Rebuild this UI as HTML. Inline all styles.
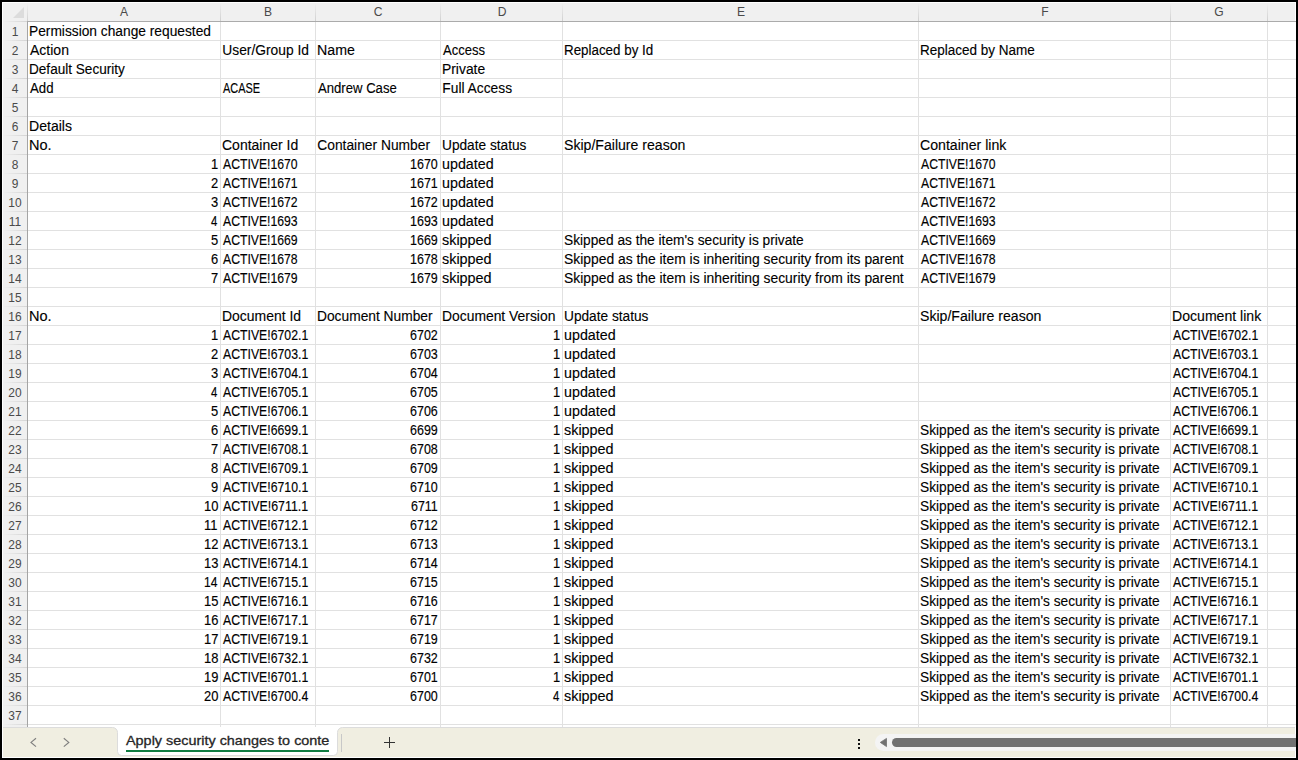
<!DOCTYPE html>
<html><head><meta charset="utf-8"><style>
html,body{margin:0;padding:0;}
body{width:1298px;height:760px;background:#000;position:relative;overflow:hidden;font-family:"Liberation Sans",sans-serif;}
#frame{position:absolute;left:2px;top:2px;width:1294px;height:756px;background:#fff;overflow:hidden;}
.abs{position:absolute;}
#colhdr{position:absolute;left:1px;top:1px;width:1292px;height:18px;background:#f0f0f0;}
#rowhdr{position:absolute;left:1px;top:1px;width:24px;height:724px;background:#f0f0f0;}
#hdrline{position:absolute;left:25px;top:19px;width:1269px;height:1px;background:#ababab;}
#hdrline0{position:absolute;left:1px;top:19px;width:24px;height:1px;background:linear-gradient(to right,#f0f0f0,#d4d4d4);}
#rhline0{position:absolute;left:25px;top:1px;width:1px;height:18px;background:linear-gradient(to bottom,#f0f0f0,#d0d0d0);}
#rhline{position:absolute;left:25px;top:20px;width:1px;height:705px;background:#a4a4a4;}
.vl{position:absolute;top:20px;width:1px;height:705px;background:#e1e1e1;margin-left:-2px;}
.hvl{position:absolute;top:1px;width:1px;height:18px;background:linear-gradient(to bottom,#f0f0f0,#d0d0d0);margin-left:-2px;}
.hl{position:absolute;left:26px;width:1269px;height:1px;background:#e1e1e1;margin-top:-2px;}
.rhl{position:absolute;left:1px;width:24px;height:1px;background:linear-gradient(to right,#f0f0f0,#d4d4d4);margin-top:-2px;}
.t{position:absolute;font-size:13.8px;line-height:19px;white-space:pre;color:#000;-webkit-text-stroke:0.12px #000;transform-origin:0 0;margin-left:-2px;margin-top:-2px;}
.cl{position:absolute;top:0px;width:60px;height:18px;line-height:19px;text-align:center;font-size:13px;color:#4a4a4a;margin-left:-2px;transform:scaleX(0.93);}
.rn{position:absolute;left:1px;width:24px;height:18px;line-height:19px;text-align:center;font-size:13px;color:#4a4a4a;margin-top:-2px;transform:scaleX(0.92);}
#corner{position:absolute;left:10.5px;top:4.5px;width:0;height:0;border-left:11px solid transparent;border-bottom:11px solid #dcdcdc;}
</style></head><body>
<div id="frame">
<div id="colhdr"></div><div id="rowhdr"></div>
<div id="corner"></div>
<div class="vl" style="left:220px"></div><div class="hvl" style="left:220px"></div><div class="vl" style="left:315px"></div><div class="hvl" style="left:315px"></div><div class="vl" style="left:440px"></div><div class="hvl" style="left:440px"></div><div class="vl" style="left:562px"></div><div class="hvl" style="left:562px"></div><div class="vl" style="left:918px"></div><div class="hvl" style="left:918px"></div><div class="vl" style="left:1170px"></div><div class="hvl" style="left:1170px"></div><div class="vl" style="left:1267px"></div><div class="hvl" style="left:1267px"></div><div class="hl" style="top:40px"></div><div class="rhl" style="top:40px"></div><div class="hl" style="top:59px"></div><div class="rhl" style="top:59px"></div><div class="hl" style="top:78px"></div><div class="rhl" style="top:78px"></div><div class="hl" style="top:97px"></div><div class="rhl" style="top:97px"></div><div class="hl" style="top:116px"></div><div class="rhl" style="top:116px"></div><div class="hl" style="top:135px"></div><div class="rhl" style="top:135px"></div><div class="hl" style="top:154px"></div><div class="rhl" style="top:154px"></div><div class="hl" style="top:173px"></div><div class="rhl" style="top:173px"></div><div class="hl" style="top:192px"></div><div class="rhl" style="top:192px"></div><div class="hl" style="top:211px"></div><div class="rhl" style="top:211px"></div><div class="hl" style="top:230px"></div><div class="rhl" style="top:230px"></div><div class="hl" style="top:249px"></div><div class="rhl" style="top:249px"></div><div class="hl" style="top:268px"></div><div class="rhl" style="top:268px"></div><div class="hl" style="top:287px"></div><div class="rhl" style="top:287px"></div><div class="hl" style="top:306px"></div><div class="rhl" style="top:306px"></div><div class="hl" style="top:325px"></div><div class="rhl" style="top:325px"></div><div class="hl" style="top:344px"></div><div class="rhl" style="top:344px"></div><div class="hl" style="top:363px"></div><div class="rhl" style="top:363px"></div><div class="hl" style="top:382px"></div><div class="rhl" style="top:382px"></div><div class="hl" style="top:401px"></div><div class="rhl" style="top:401px"></div><div class="hl" style="top:420px"></div><div class="rhl" style="top:420px"></div><div class="hl" style="top:439px"></div><div class="rhl" style="top:439px"></div><div class="hl" style="top:458px"></div><div class="rhl" style="top:458px"></div><div class="hl" style="top:477px"></div><div class="rhl" style="top:477px"></div><div class="hl" style="top:496px"></div><div class="rhl" style="top:496px"></div><div class="hl" style="top:515px"></div><div class="rhl" style="top:515px"></div><div class="hl" style="top:534px"></div><div class="rhl" style="top:534px"></div><div class="hl" style="top:553px"></div><div class="rhl" style="top:553px"></div><div class="hl" style="top:572px"></div><div class="rhl" style="top:572px"></div><div class="hl" style="top:591px"></div><div class="rhl" style="top:591px"></div><div class="hl" style="top:610px"></div><div class="rhl" style="top:610px"></div><div class="hl" style="top:629px"></div><div class="rhl" style="top:629px"></div><div class="hl" style="top:648px"></div><div class="rhl" style="top:648px"></div><div class="hl" style="top:667px"></div><div class="rhl" style="top:667px"></div><div class="hl" style="top:686px"></div><div class="rhl" style="top:686px"></div><div class="hl" style="top:705px"></div><div class="rhl" style="top:705px"></div><div class="hl" style="top:724px"></div><div class="rhl" style="top:724px"></div>
<div id="hdrline"></div><div id="hdrline0"></div><div id="rhline"></div><div id="rhline0"></div>
<div class="cl" style="left:94.0px">A</div><div class="cl" style="left:238.0px">B</div><div class="cl" style="left:348.0px">C</div><div class="cl" style="left:471.5px">D</div><div class="cl" style="left:710.5px">E</div><div class="cl" style="left:1014.5px">F</div><div class="cl" style="left:1189.0px">G</div>
<div class="rn" style="top:22px">1</div><div class="rn" style="top:41px">2</div><div class="rn" style="top:60px">3</div><div class="rn" style="top:79px">4</div><div class="rn" style="top:98px">5</div><div class="rn" style="top:117px">6</div><div class="rn" style="top:136px">7</div><div class="rn" style="top:155px">8</div><div class="rn" style="top:174px">9</div><div class="rn" style="top:193px">10</div><div class="rn" style="top:212px">11</div><div class="rn" style="top:231px">12</div><div class="rn" style="top:250px">13</div><div class="rn" style="top:269px">14</div><div class="rn" style="top:288px">15</div><div class="rn" style="top:307px">16</div><div class="rn" style="top:326px">17</div><div class="rn" style="top:345px">18</div><div class="rn" style="top:364px">19</div><div class="rn" style="top:383px">20</div><div class="rn" style="top:402px">21</div><div class="rn" style="top:421px">22</div><div class="rn" style="top:440px">23</div><div class="rn" style="top:459px">24</div><div class="rn" style="top:478px">25</div><div class="rn" style="top:497px">26</div><div class="rn" style="top:516px">27</div><div class="rn" style="top:535px">28</div><div class="rn" style="top:554px">29</div><div class="rn" style="top:573px">30</div><div class="rn" style="top:592px">31</div><div class="rn" style="top:611px">32</div><div class="rn" style="top:630px">33</div><div class="rn" style="top:649px">34</div><div class="rn" style="top:668px">35</div><div class="rn" style="top:687px">36</div><div class="rn" style="top:706px">37</div>
<span class="t" style="left:29.30px;top:22px;transform:scaleX(0.9967)">Permission change requested</span><span class="t" style="left:30.30px;top:41px;transform:scaleX(1.0158)">Action</span><span class="t" style="left:222.30px;top:41px;transform:scaleX(1.0000)">User/Group Id</span><span class="t" style="left:317.27px;top:41px;transform:scaleX(1.0286)">Name</span><span class="t" style="left:443.30px;top:41px;transform:scaleX(0.9455)">Access</span><span class="t" style="left:564.33px;top:41px;transform:scaleX(0.9689)">Replaced by Id</span><span class="t" style="left:920.32px;top:41px;transform:scaleX(0.9784)">Replaced by Name</span><span class="t" style="left:29.32px;top:60px;transform:scaleX(0.9844)">Default Security</span><span class="t" style="left:442.30px;top:60px;transform:scaleX(1.0049)">Private</span><span class="t" style="left:30.30px;top:79px;transform:scaleX(0.9583)">Add</span><span class="t" style="left:223.30px;top:79px;font-size:14.2px;-webkit-text-stroke:0.15px #000;transform:scaleX(0.7708)">ACASE</span><span class="t" style="left:318.30px;top:79px;transform:scaleX(0.9512)">Andrew Case</span><span class="t" style="left:442.30px;top:79px;transform:scaleX(1.0000)">Full Access</span><span class="t" style="left:29.28px;top:117px;transform:scaleX(1.0195)">Details</span><span class="t" style="left:29.25px;top:136px;transform:scaleX(1.0526)">No.</span><span class="t" style="left:222.29px;top:136px;transform:scaleX(1.0137)">Container Id</span><span class="t" style="left:317.30px;top:136px;transform:scaleX(1.0000)">Container Number</span><span class="t" style="left:442.31px;top:136px;transform:scaleX(0.9917)">Update status</span><span class="t" style="left:564.28px;top:136px;transform:scaleX(1.0214)">Skip/Failure reason</span><span class="t" style="left:920.28px;top:136px;transform:scaleX(1.0241)">Container link</span><span class="t" style="left:210.83px;top:155px;font-size:14.2px;-webkit-text-stroke:0.15px #000;transform:scaleX(0.9100)">1</span><span class="t" style="left:223.30px;top:155px;font-size:14.2px;-webkit-text-stroke:0.15px #000;transform:scaleX(0.8605)">ACTIVE!1670</span><span class="t" style="left:409.93px;top:155px;font-size:14.2px;-webkit-text-stroke:0.15px #000;transform:scaleX(0.8797)">1670</span><span class="t" style="left:442.26px;top:155px;transform:scaleX(1.0354)">updated</span><span class="t" style="left:921.30px;top:155px;font-size:14.2px;-webkit-text-stroke:0.15px #000;transform:scaleX(0.8605)">ACTIVE!1670</span><span class="t" style="left:210.83px;top:174px;font-size:14.2px;-webkit-text-stroke:0.15px #000;transform:scaleX(0.9100)">2</span><span class="t" style="left:223.30px;top:174px;font-size:14.2px;-webkit-text-stroke:0.15px #000;transform:scaleX(0.8605)">ACTIVE!1671</span><span class="t" style="left:409.93px;top:174px;font-size:14.2px;-webkit-text-stroke:0.15px #000;transform:scaleX(0.8797)">1671</span><span class="t" style="left:442.26px;top:174px;transform:scaleX(1.0354)">updated</span><span class="t" style="left:921.30px;top:174px;font-size:14.2px;-webkit-text-stroke:0.15px #000;transform:scaleX(0.8605)">ACTIVE!1671</span><span class="t" style="left:210.83px;top:193px;font-size:14.2px;-webkit-text-stroke:0.15px #000;transform:scaleX(0.9100)">3</span><span class="t" style="left:223.30px;top:193px;font-size:14.2px;-webkit-text-stroke:0.15px #000;transform:scaleX(0.8605)">ACTIVE!1672</span><span class="t" style="left:409.93px;top:193px;font-size:14.2px;-webkit-text-stroke:0.15px #000;transform:scaleX(0.8797)">1672</span><span class="t" style="left:442.26px;top:193px;transform:scaleX(1.0354)">updated</span><span class="t" style="left:921.30px;top:193px;font-size:14.2px;-webkit-text-stroke:0.15px #000;transform:scaleX(0.8605)">ACTIVE!1672</span><span class="t" style="left:210.83px;top:212px;font-size:14.2px;-webkit-text-stroke:0.15px #000;transform:scaleX(0.7963)">4</span><span class="t" style="left:223.30px;top:212px;font-size:14.2px;-webkit-text-stroke:0.15px #000;transform:scaleX(0.8605)">ACTIVE!1693</span><span class="t" style="left:409.93px;top:212px;font-size:14.2px;-webkit-text-stroke:0.15px #000;transform:scaleX(0.8797)">1693</span><span class="t" style="left:442.26px;top:212px;transform:scaleX(1.0354)">updated</span><span class="t" style="left:921.30px;top:212px;font-size:14.2px;-webkit-text-stroke:0.15px #000;transform:scaleX(0.8605)">ACTIVE!1693</span><span class="t" style="left:210.83px;top:231px;font-size:14.2px;-webkit-text-stroke:0.15px #000;transform:scaleX(0.9100)">5</span><span class="t" style="left:223.30px;top:231px;font-size:14.2px;-webkit-text-stroke:0.15px #000;transform:scaleX(0.8605)">ACTIVE!1669</span><span class="t" style="left:409.93px;top:231px;font-size:14.2px;-webkit-text-stroke:0.15px #000;transform:scaleX(0.8797)">1669</span><span class="t" style="left:442.26px;top:231px;transform:scaleX(1.0435)">skipped</span><span class="t" style="left:564.31px;top:231px;transform:scaleX(0.9942)">Skipped as the item's security is private</span><span class="t" style="left:921.30px;top:231px;font-size:14.2px;-webkit-text-stroke:0.15px #000;transform:scaleX(0.8605)">ACTIVE!1669</span><span class="t" style="left:210.83px;top:250px;font-size:14.2px;-webkit-text-stroke:0.15px #000;transform:scaleX(0.9100)">6</span><span class="t" style="left:223.30px;top:250px;font-size:14.2px;-webkit-text-stroke:0.15px #000;transform:scaleX(0.8605)">ACTIVE!1678</span><span class="t" style="left:409.93px;top:250px;font-size:14.2px;-webkit-text-stroke:0.15px #000;transform:scaleX(0.8797)">1678</span><span class="t" style="left:442.26px;top:250px;transform:scaleX(1.0435)">skipped</span><span class="t" style="left:564.30px;top:250px;transform:scaleX(1.0045)">Skipped as the item is inheriting security from its parent</span><span class="t" style="left:921.30px;top:250px;font-size:14.2px;-webkit-text-stroke:0.15px #000;transform:scaleX(0.8605)">ACTIVE!1678</span><span class="t" style="left:210.83px;top:269px;font-size:14.2px;-webkit-text-stroke:0.15px #000;transform:scaleX(0.9100)">7</span><span class="t" style="left:223.30px;top:269px;font-size:14.2px;-webkit-text-stroke:0.15px #000;transform:scaleX(0.8605)">ACTIVE!1679</span><span class="t" style="left:409.93px;top:269px;font-size:14.2px;-webkit-text-stroke:0.15px #000;transform:scaleX(0.8797)">1679</span><span class="t" style="left:442.26px;top:269px;transform:scaleX(1.0435)">skipped</span><span class="t" style="left:564.30px;top:269px;transform:scaleX(1.0045)">Skipped as the item is inheriting security from its parent</span><span class="t" style="left:921.30px;top:269px;font-size:14.2px;-webkit-text-stroke:0.15px #000;transform:scaleX(0.8605)">ACTIVE!1679</span><span class="t" style="left:29.25px;top:307px;transform:scaleX(1.0526)">No.</span><span class="t" style="left:222.29px;top:307px;transform:scaleX(1.0105)">Document Id</span><span class="t" style="left:317.30px;top:307px;transform:scaleX(0.9983)">Document Number</span><span class="t" style="left:442.29px;top:307px;transform:scaleX(1.0054)">Document Version</span><span class="t" style="left:564.31px;top:307px;transform:scaleX(0.9917)">Update status</span><span class="t" style="left:920.28px;top:307px;transform:scaleX(1.0214)">Skip/Failure reason</span><span class="t" style="left:1172.28px;top:307px;transform:scaleX(1.0209)">Document link</span><span class="t" style="left:210.83px;top:326px;font-size:14.2px;-webkit-text-stroke:0.15px #000;transform:scaleX(0.9100)">1</span><span class="t" style="left:223.30px;top:326px;font-size:14.2px;-webkit-text-stroke:0.15px #000;transform:scaleX(0.8643)">ACTIVE!6702.1</span><span class="t" style="left:409.93px;top:326px;font-size:14.2px;-webkit-text-stroke:0.15px #000;transform:scaleX(0.8797)">6702</span><span class="t" style="left:552.83px;top:326px;font-size:14.2px;-webkit-text-stroke:0.15px #000;transform:scaleX(0.9100)">1</span><span class="t" style="left:564.26px;top:326px;transform:scaleX(1.0354)">updated</span><span class="t" style="left:1173.30px;top:326px;font-size:14.2px;-webkit-text-stroke:0.15px #000;transform:scaleX(0.8643)">ACTIVE!6702.1</span><span class="t" style="left:210.83px;top:345px;font-size:14.2px;-webkit-text-stroke:0.15px #000;transform:scaleX(0.9100)">2</span><span class="t" style="left:223.30px;top:345px;font-size:14.2px;-webkit-text-stroke:0.15px #000;transform:scaleX(0.8643)">ACTIVE!6703.1</span><span class="t" style="left:409.93px;top:345px;font-size:14.2px;-webkit-text-stroke:0.15px #000;transform:scaleX(0.8797)">6703</span><span class="t" style="left:552.83px;top:345px;font-size:14.2px;-webkit-text-stroke:0.15px #000;transform:scaleX(0.9100)">1</span><span class="t" style="left:564.26px;top:345px;transform:scaleX(1.0354)">updated</span><span class="t" style="left:1173.30px;top:345px;font-size:14.2px;-webkit-text-stroke:0.15px #000;transform:scaleX(0.8643)">ACTIVE!6703.1</span><span class="t" style="left:210.83px;top:364px;font-size:14.2px;-webkit-text-stroke:0.15px #000;transform:scaleX(0.9100)">3</span><span class="t" style="left:223.30px;top:364px;font-size:14.2px;-webkit-text-stroke:0.15px #000;transform:scaleX(0.8643)">ACTIVE!6704.1</span><span class="t" style="left:409.93px;top:364px;font-size:14.2px;-webkit-text-stroke:0.15px #000;transform:scaleX(0.8797)">6704</span><span class="t" style="left:552.83px;top:364px;font-size:14.2px;-webkit-text-stroke:0.15px #000;transform:scaleX(0.9100)">1</span><span class="t" style="left:564.26px;top:364px;transform:scaleX(1.0354)">updated</span><span class="t" style="left:1173.30px;top:364px;font-size:14.2px;-webkit-text-stroke:0.15px #000;transform:scaleX(0.8643)">ACTIVE!6704.1</span><span class="t" style="left:210.83px;top:383px;font-size:14.2px;-webkit-text-stroke:0.15px #000;transform:scaleX(0.7963)">4</span><span class="t" style="left:223.30px;top:383px;font-size:14.2px;-webkit-text-stroke:0.15px #000;transform:scaleX(0.8643)">ACTIVE!6705.1</span><span class="t" style="left:409.93px;top:383px;font-size:14.2px;-webkit-text-stroke:0.15px #000;transform:scaleX(0.8797)">6705</span><span class="t" style="left:552.83px;top:383px;font-size:14.2px;-webkit-text-stroke:0.15px #000;transform:scaleX(0.9100)">1</span><span class="t" style="left:564.26px;top:383px;transform:scaleX(1.0354)">updated</span><span class="t" style="left:1173.30px;top:383px;font-size:14.2px;-webkit-text-stroke:0.15px #000;transform:scaleX(0.8643)">ACTIVE!6705.1</span><span class="t" style="left:210.83px;top:402px;font-size:14.2px;-webkit-text-stroke:0.15px #000;transform:scaleX(0.9100)">5</span><span class="t" style="left:223.30px;top:402px;font-size:14.2px;-webkit-text-stroke:0.15px #000;transform:scaleX(0.8643)">ACTIVE!6706.1</span><span class="t" style="left:409.93px;top:402px;font-size:14.2px;-webkit-text-stroke:0.15px #000;transform:scaleX(0.8797)">6706</span><span class="t" style="left:552.83px;top:402px;font-size:14.2px;-webkit-text-stroke:0.15px #000;transform:scaleX(0.9100)">1</span><span class="t" style="left:564.26px;top:402px;transform:scaleX(1.0354)">updated</span><span class="t" style="left:1173.30px;top:402px;font-size:14.2px;-webkit-text-stroke:0.15px #000;transform:scaleX(0.8643)">ACTIVE!6706.1</span><span class="t" style="left:210.83px;top:421px;font-size:14.2px;-webkit-text-stroke:0.15px #000;transform:scaleX(0.9100)">6</span><span class="t" style="left:223.30px;top:421px;font-size:14.2px;-webkit-text-stroke:0.15px #000;transform:scaleX(0.8643)">ACTIVE!6699.1</span><span class="t" style="left:409.93px;top:421px;font-size:14.2px;-webkit-text-stroke:0.15px #000;transform:scaleX(0.8797)">6699</span><span class="t" style="left:552.83px;top:421px;font-size:14.2px;-webkit-text-stroke:0.15px #000;transform:scaleX(0.9100)">1</span><span class="t" style="left:564.26px;top:421px;transform:scaleX(1.0435)">skipped</span><span class="t" style="left:920.31px;top:421px;transform:scaleX(0.9942)">Skipped as the item's security is private</span><span class="t" style="left:1173.30px;top:421px;font-size:14.2px;-webkit-text-stroke:0.15px #000;transform:scaleX(0.8643)">ACTIVE!6699.1</span><span class="t" style="left:210.83px;top:440px;font-size:14.2px;-webkit-text-stroke:0.15px #000;transform:scaleX(0.9100)">7</span><span class="t" style="left:223.30px;top:440px;font-size:14.2px;-webkit-text-stroke:0.15px #000;transform:scaleX(0.8643)">ACTIVE!6708.1</span><span class="t" style="left:409.93px;top:440px;font-size:14.2px;-webkit-text-stroke:0.15px #000;transform:scaleX(0.8797)">6708</span><span class="t" style="left:552.83px;top:440px;font-size:14.2px;-webkit-text-stroke:0.15px #000;transform:scaleX(0.9100)">1</span><span class="t" style="left:564.26px;top:440px;transform:scaleX(1.0435)">skipped</span><span class="t" style="left:920.31px;top:440px;transform:scaleX(0.9942)">Skipped as the item's security is private</span><span class="t" style="left:1173.30px;top:440px;font-size:14.2px;-webkit-text-stroke:0.15px #000;transform:scaleX(0.8643)">ACTIVE!6708.1</span><span class="t" style="left:210.83px;top:459px;font-size:14.2px;-webkit-text-stroke:0.15px #000;transform:scaleX(0.9100)">8</span><span class="t" style="left:223.30px;top:459px;font-size:14.2px;-webkit-text-stroke:0.15px #000;transform:scaleX(0.8643)">ACTIVE!6709.1</span><span class="t" style="left:409.93px;top:459px;font-size:14.2px;-webkit-text-stroke:0.15px #000;transform:scaleX(0.8797)">6709</span><span class="t" style="left:552.83px;top:459px;font-size:14.2px;-webkit-text-stroke:0.15px #000;transform:scaleX(0.9100)">1</span><span class="t" style="left:564.26px;top:459px;transform:scaleX(1.0435)">skipped</span><span class="t" style="left:920.31px;top:459px;transform:scaleX(0.9942)">Skipped as the item's security is private</span><span class="t" style="left:1173.30px;top:459px;font-size:14.2px;-webkit-text-stroke:0.15px #000;transform:scaleX(0.8643)">ACTIVE!6709.1</span><span class="t" style="left:210.83px;top:478px;font-size:14.2px;-webkit-text-stroke:0.15px #000;transform:scaleX(0.9100)">9</span><span class="t" style="left:223.30px;top:478px;font-size:14.2px;-webkit-text-stroke:0.15px #000;transform:scaleX(0.8643)">ACTIVE!6710.1</span><span class="t" style="left:409.93px;top:478px;font-size:14.2px;-webkit-text-stroke:0.15px #000;transform:scaleX(0.8797)">6710</span><span class="t" style="left:552.83px;top:478px;font-size:14.2px;-webkit-text-stroke:0.15px #000;transform:scaleX(0.9100)">1</span><span class="t" style="left:564.26px;top:478px;transform:scaleX(1.0435)">skipped</span><span class="t" style="left:920.31px;top:478px;transform:scaleX(0.9942)">Skipped as the item's security is private</span><span class="t" style="left:1173.30px;top:478px;font-size:14.2px;-webkit-text-stroke:0.15px #000;transform:scaleX(0.8643)">ACTIVE!6710.1</span><span class="t" style="left:203.55px;top:497px;font-size:14.2px;-webkit-text-stroke:0.15px #000;transform:scaleX(0.9100)">10</span><span class="t" style="left:223.30px;top:497px;font-size:14.2px;-webkit-text-stroke:0.15px #000;transform:scaleX(0.8732)">ACTIVE!6711.1</span><span class="t" style="left:410.84px;top:497px;font-size:14.2px;-webkit-text-stroke:0.15px #000;transform:scaleX(0.8786)">6711</span><span class="t" style="left:552.83px;top:497px;font-size:14.2px;-webkit-text-stroke:0.15px #000;transform:scaleX(0.9100)">1</span><span class="t" style="left:564.26px;top:497px;transform:scaleX(1.0435)">skipped</span><span class="t" style="left:920.31px;top:497px;transform:scaleX(0.9942)">Skipped as the item's security is private</span><span class="t" style="left:1173.30px;top:497px;font-size:14.2px;-webkit-text-stroke:0.15px #000;transform:scaleX(0.8732)">ACTIVE!6711.1</span><span class="t" style="left:204.46px;top:516px;font-size:14.2px;-webkit-text-stroke:0.15px #000;transform:scaleX(0.9100)">11</span><span class="t" style="left:223.30px;top:516px;font-size:14.2px;-webkit-text-stroke:0.15px #000;transform:scaleX(0.8643)">ACTIVE!6712.1</span><span class="t" style="left:409.93px;top:516px;font-size:14.2px;-webkit-text-stroke:0.15px #000;transform:scaleX(0.8797)">6712</span><span class="t" style="left:552.83px;top:516px;font-size:14.2px;-webkit-text-stroke:0.15px #000;transform:scaleX(0.9100)">1</span><span class="t" style="left:564.26px;top:516px;transform:scaleX(1.0435)">skipped</span><span class="t" style="left:920.31px;top:516px;transform:scaleX(0.9942)">Skipped as the item's security is private</span><span class="t" style="left:1173.30px;top:516px;font-size:14.2px;-webkit-text-stroke:0.15px #000;transform:scaleX(0.8643)">ACTIVE!6712.1</span><span class="t" style="left:203.55px;top:535px;font-size:14.2px;-webkit-text-stroke:0.15px #000;transform:scaleX(0.9100)">12</span><span class="t" style="left:223.30px;top:535px;font-size:14.2px;-webkit-text-stroke:0.15px #000;transform:scaleX(0.8643)">ACTIVE!6713.1</span><span class="t" style="left:409.93px;top:535px;font-size:14.2px;-webkit-text-stroke:0.15px #000;transform:scaleX(0.8797)">6713</span><span class="t" style="left:552.83px;top:535px;font-size:14.2px;-webkit-text-stroke:0.15px #000;transform:scaleX(0.9100)">1</span><span class="t" style="left:564.26px;top:535px;transform:scaleX(1.0435)">skipped</span><span class="t" style="left:920.31px;top:535px;transform:scaleX(0.9942)">Skipped as the item's security is private</span><span class="t" style="left:1173.30px;top:535px;font-size:14.2px;-webkit-text-stroke:0.15px #000;transform:scaleX(0.8643)">ACTIVE!6713.1</span><span class="t" style="left:203.55px;top:554px;font-size:14.2px;-webkit-text-stroke:0.15px #000;transform:scaleX(0.9100)">13</span><span class="t" style="left:223.30px;top:554px;font-size:14.2px;-webkit-text-stroke:0.15px #000;transform:scaleX(0.8643)">ACTIVE!6714.1</span><span class="t" style="left:409.93px;top:554px;font-size:14.2px;-webkit-text-stroke:0.15px #000;transform:scaleX(0.8797)">6714</span><span class="t" style="left:552.83px;top:554px;font-size:14.2px;-webkit-text-stroke:0.15px #000;transform:scaleX(0.9100)">1</span><span class="t" style="left:564.26px;top:554px;transform:scaleX(1.0435)">skipped</span><span class="t" style="left:920.31px;top:554px;transform:scaleX(0.9942)">Skipped as the item's security is private</span><span class="t" style="left:1173.30px;top:554px;font-size:14.2px;-webkit-text-stroke:0.15px #000;transform:scaleX(0.8643)">ACTIVE!6714.1</span><span class="t" style="left:203.61px;top:573px;font-size:14.2px;-webkit-text-stroke:0.15px #000;transform:scaleX(0.8493)">14</span><span class="t" style="left:223.30px;top:573px;font-size:14.2px;-webkit-text-stroke:0.15px #000;transform:scaleX(0.8643)">ACTIVE!6715.1</span><span class="t" style="left:409.93px;top:573px;font-size:14.2px;-webkit-text-stroke:0.15px #000;transform:scaleX(0.8797)">6715</span><span class="t" style="left:552.83px;top:573px;font-size:14.2px;-webkit-text-stroke:0.15px #000;transform:scaleX(0.9100)">1</span><span class="t" style="left:564.26px;top:573px;transform:scaleX(1.0435)">skipped</span><span class="t" style="left:920.31px;top:573px;transform:scaleX(0.9942)">Skipped as the item's security is private</span><span class="t" style="left:1173.30px;top:573px;font-size:14.2px;-webkit-text-stroke:0.15px #000;transform:scaleX(0.8643)">ACTIVE!6715.1</span><span class="t" style="left:203.55px;top:592px;font-size:14.2px;-webkit-text-stroke:0.15px #000;transform:scaleX(0.9100)">15</span><span class="t" style="left:223.30px;top:592px;font-size:14.2px;-webkit-text-stroke:0.15px #000;transform:scaleX(0.8643)">ACTIVE!6716.1</span><span class="t" style="left:409.93px;top:592px;font-size:14.2px;-webkit-text-stroke:0.15px #000;transform:scaleX(0.8797)">6716</span><span class="t" style="left:552.83px;top:592px;font-size:14.2px;-webkit-text-stroke:0.15px #000;transform:scaleX(0.9100)">1</span><span class="t" style="left:564.26px;top:592px;transform:scaleX(1.0435)">skipped</span><span class="t" style="left:920.31px;top:592px;transform:scaleX(0.9942)">Skipped as the item's security is private</span><span class="t" style="left:1173.30px;top:592px;font-size:14.2px;-webkit-text-stroke:0.15px #000;transform:scaleX(0.8643)">ACTIVE!6716.1</span><span class="t" style="left:203.55px;top:611px;font-size:14.2px;-webkit-text-stroke:0.15px #000;transform:scaleX(0.9100)">16</span><span class="t" style="left:223.30px;top:611px;font-size:14.2px;-webkit-text-stroke:0.15px #000;transform:scaleX(0.8643)">ACTIVE!6717.1</span><span class="t" style="left:409.93px;top:611px;font-size:14.2px;-webkit-text-stroke:0.15px #000;transform:scaleX(0.8797)">6717</span><span class="t" style="left:552.83px;top:611px;font-size:14.2px;-webkit-text-stroke:0.15px #000;transform:scaleX(0.9100)">1</span><span class="t" style="left:564.26px;top:611px;transform:scaleX(1.0435)">skipped</span><span class="t" style="left:920.31px;top:611px;transform:scaleX(0.9942)">Skipped as the item's security is private</span><span class="t" style="left:1173.30px;top:611px;font-size:14.2px;-webkit-text-stroke:0.15px #000;transform:scaleX(0.8643)">ACTIVE!6717.1</span><span class="t" style="left:203.55px;top:630px;font-size:14.2px;-webkit-text-stroke:0.15px #000;transform:scaleX(0.9100)">17</span><span class="t" style="left:223.30px;top:630px;font-size:14.2px;-webkit-text-stroke:0.15px #000;transform:scaleX(0.8643)">ACTIVE!6719.1</span><span class="t" style="left:409.93px;top:630px;font-size:14.2px;-webkit-text-stroke:0.15px #000;transform:scaleX(0.8797)">6719</span><span class="t" style="left:552.83px;top:630px;font-size:14.2px;-webkit-text-stroke:0.15px #000;transform:scaleX(0.9100)">1</span><span class="t" style="left:564.26px;top:630px;transform:scaleX(1.0435)">skipped</span><span class="t" style="left:920.31px;top:630px;transform:scaleX(0.9942)">Skipped as the item's security is private</span><span class="t" style="left:1173.30px;top:630px;font-size:14.2px;-webkit-text-stroke:0.15px #000;transform:scaleX(0.8643)">ACTIVE!6719.1</span><span class="t" style="left:203.55px;top:649px;font-size:14.2px;-webkit-text-stroke:0.15px #000;transform:scaleX(0.9100)">18</span><span class="t" style="left:223.30px;top:649px;font-size:14.2px;-webkit-text-stroke:0.15px #000;transform:scaleX(0.8643)">ACTIVE!6732.1</span><span class="t" style="left:409.93px;top:649px;font-size:14.2px;-webkit-text-stroke:0.15px #000;transform:scaleX(0.8797)">6732</span><span class="t" style="left:552.83px;top:649px;font-size:14.2px;-webkit-text-stroke:0.15px #000;transform:scaleX(0.9100)">1</span><span class="t" style="left:564.26px;top:649px;transform:scaleX(1.0435)">skipped</span><span class="t" style="left:920.31px;top:649px;transform:scaleX(0.9942)">Skipped as the item's security is private</span><span class="t" style="left:1173.30px;top:649px;font-size:14.2px;-webkit-text-stroke:0.15px #000;transform:scaleX(0.8643)">ACTIVE!6732.1</span><span class="t" style="left:203.55px;top:668px;font-size:14.2px;-webkit-text-stroke:0.15px #000;transform:scaleX(0.9100)">19</span><span class="t" style="left:223.30px;top:668px;font-size:14.2px;-webkit-text-stroke:0.15px #000;transform:scaleX(0.8643)">ACTIVE!6701.1</span><span class="t" style="left:409.93px;top:668px;font-size:14.2px;-webkit-text-stroke:0.15px #000;transform:scaleX(0.8797)">6701</span><span class="t" style="left:552.83px;top:668px;font-size:14.2px;-webkit-text-stroke:0.15px #000;transform:scaleX(0.9100)">1</span><span class="t" style="left:564.26px;top:668px;transform:scaleX(1.0435)">skipped</span><span class="t" style="left:920.31px;top:668px;transform:scaleX(0.9942)">Skipped as the item's security is private</span><span class="t" style="left:1173.30px;top:668px;font-size:14.2px;-webkit-text-stroke:0.15px #000;transform:scaleX(0.8643)">ACTIVE!6701.1</span><span class="t" style="left:203.55px;top:687px;font-size:14.2px;-webkit-text-stroke:0.15px #000;transform:scaleX(0.9100)">20</span><span class="t" style="left:223.30px;top:687px;font-size:14.2px;-webkit-text-stroke:0.15px #000;transform:scaleX(0.8643)">ACTIVE!6700.4</span><span class="t" style="left:409.93px;top:687px;font-size:14.2px;-webkit-text-stroke:0.15px #000;transform:scaleX(0.8797)">6700</span><span class="t" style="left:552.83px;top:687px;font-size:14.2px;-webkit-text-stroke:0.15px #000;transform:scaleX(0.7963)">4</span><span class="t" style="left:564.26px;top:687px;transform:scaleX(1.0435)">skipped</span><span class="t" style="left:920.31px;top:687px;transform:scaleX(0.9942)">Skipped as the item's security is private</span><span class="t" style="left:1173.30px;top:687px;font-size:14.2px;-webkit-text-stroke:0.15px #000;transform:scaleX(0.8643)">ACTIVE!6700.4</span>

<svg style="position:absolute;left:-2px;top:-2px" width="1298" height="760">
<path d="M3,727.5 H112.5 A5,5 0 0 1 117.5,732.5 V751.5 A4,4 0 0 0 121.5,755.5 H333.5 A4,4 0 0 0 337.5,751.5 V732.5 A5,5 0 0 1 342.5,727.5 H1295 V757 H3 Z" fill="#f0eee1"/>
<path d="M3,727.5 H112.5 A5,5 0 0 1 117.5,732.5 V751.5 A4,4 0 0 0 121.5,755.5 H333.5 A4,4 0 0 0 337.5,751.5 V732.5 A5,5 0 0 1 342.5,727.5 H1295" fill="none" stroke="#dcdcdc" stroke-width="1"/>
<polyline points="36,738.2 31,742.4 36,746.6" fill="none" stroke="#7e7e7e" stroke-width="1.15"/>
<polyline points="63.8,738.2 68.8,742.4 63.8,746.6" fill="none" stroke="#7e7e7e" stroke-width="1.15"/>
<rect x="341" y="734" width="1" height="18" fill="#c8c8c8"/>
<rect x="389" y="737" width="1" height="11" fill="#333"/>
<rect x="384" y="742" width="11" height="1" fill="#333"/>
<rect x="858" y="739" width="2" height="2" fill="#111"/>
<rect x="858" y="743" width="2" height="2" fill="#111"/>
<rect x="858" y="747" width="2" height="2" fill="#111"/>
<rect x="875" y="734" width="440" height="17" rx="8.5" fill="#f4f4f4"/>
<path d="M880.3,742.4 L886.5,738.4 L886.5,746.6 Z" fill="#727272" stroke="#727272" stroke-width="0.8" stroke-linejoin="round"/>
<rect x="892" y="738" width="420" height="9" rx="4.5" fill="#717171"/>
<rect x="126" y="750" width="203" height="2" fill="#107c41"/>
</svg>
<span class="t" id="tabtxt" style="left:126.00px;top:731px;font-size:13.2px;color:#262626;-webkit-text-stroke:0.3px #262626;transform:scaleX(1.0922)">Apply security changes to conte</span>

</div>
</body></html>
